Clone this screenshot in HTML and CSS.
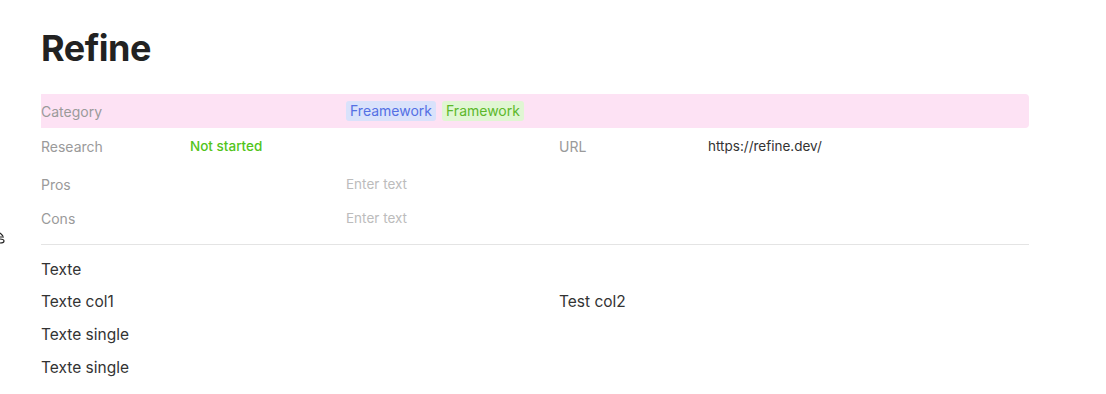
FILE: index.html
```html
<!DOCTYPE html>
<html lang="en">
<head>
    <meta charset="UTF-8">
    <meta name="viewport" content="width=device-width, initial-scale=1.0">
    <title>Refine</title>
    <link rel="stylesheet" href="styles.css">
</head>
<body>
    <svg class="edge-mark" width="6" height="12" viewBox="0 0 6 12">
        <path d="M0 1 L3 4 M0 5 L4 5 M0 7 Q4 7 4 9 Q4 11 0 11" fill="none" stroke="#222" stroke-width="1.2"/>
    </svg>
    <div class="page">
        <h1>Refine</h1>

        <div class="prop-row full highlight">
            <div class="prop-label">Category</div>
            <div class="prop-value">
                <span class="tag tag-blue">Freamework</span>
                <span class="tag tag-green">Framework</span>
            </div>
        </div>

        <div class="prop-pair">
            <div class="prop-row half">
                <div class="prop-label">Research</div>
                <div class="prop-value status">Not started</div>
            </div>
            <div class="prop-row half">
                <div class="prop-label">URL</div>
                <div class="prop-value">https://refine.dev/</div>
            </div>
        </div>

        <div class="prop-row full spaced">
            <div class="prop-label">Pros</div>
            <div class="prop-value empty">Enter text</div>
        </div>
        <div class="prop-row full">
            <div class="prop-label">Cons</div>
            <div class="prop-value empty">Enter text</div>
        </div>

        <hr class="divider">

        <div class="text-row">Texte</div>
        <div class="text-row cols">
            <div>Texte col1</div>
            <div>Test col2</div>
        </div>
        <div class="text-row tall">Texte single</div>
        <div class="text-row">Texte single</div>
    </div>
</body>
</html>
```

FILE: styles.css
```css
body {
    margin: 0;
    font-family: Inter, "Noto Sans", sans-serif;
    background-color: #fff;
    color: #333;
}
.page {
    width: 988px;
    padding: 26px 0 0 41px;
}
h1 {
    margin: 0 0 24px;
    font-size: 36px;
    line-height: 44px;
    font-weight: 700;
    color: #222;
    letter-spacing: -0.5px;
}
.prop-row {
    display: flex;
    align-items: center;
    height: 34px;
    font-size: 13.5px;
}
.prop-row.full .prop-label {
    width: 305px;
}
.prop-row.half .prop-label {
    width: 149px;
}
.prop-row.spaced {
    margin-top: 4px;
}
.highlight {
    background-color: #fde2f4;
    border-radius: 0 4px 4px 0;
}
.prop-pair {
    display: grid;
    grid-template-columns: 518px 1fr;
    margin-top: 1px;
}
.prop-label {
    color: #9a9a9a;
    font-size: 14px;
}
.prop-value {
    color: #333;
    display: flex;
    gap: 6px;
}
.status {
    color: #52c41a;
    font-weight: 500;
}
.empty {
    color: #bcbcbc;
}
.tag {
    font-size: 14px;
    line-height: 20px;
    padding: 0 4px;
    border-radius: 3px;
}
.tag-blue {
    background-color: #d9e2fb;
    color: #5470e4;
}
.tag-green {
    background-color: #e0f6d3;
    color: #5cb82b;
}
.divider {
    border: none;
    border-top: 1px solid #e4e4e4;
    margin: 9px 0 8px;
}
.text-row {
    height: 32px;
    display: flex;
    align-items: center;
    font-size: 15.5px;
    color: #333;
}
.text-row.tall {
    height: 34px;
}
.text-row.cols {
    display: grid;
    grid-template-columns: 518px 1fr;
    align-items: center;
}
.edge-mark {
    position: absolute;
    left: 0;
    top: 232px;
}
```
